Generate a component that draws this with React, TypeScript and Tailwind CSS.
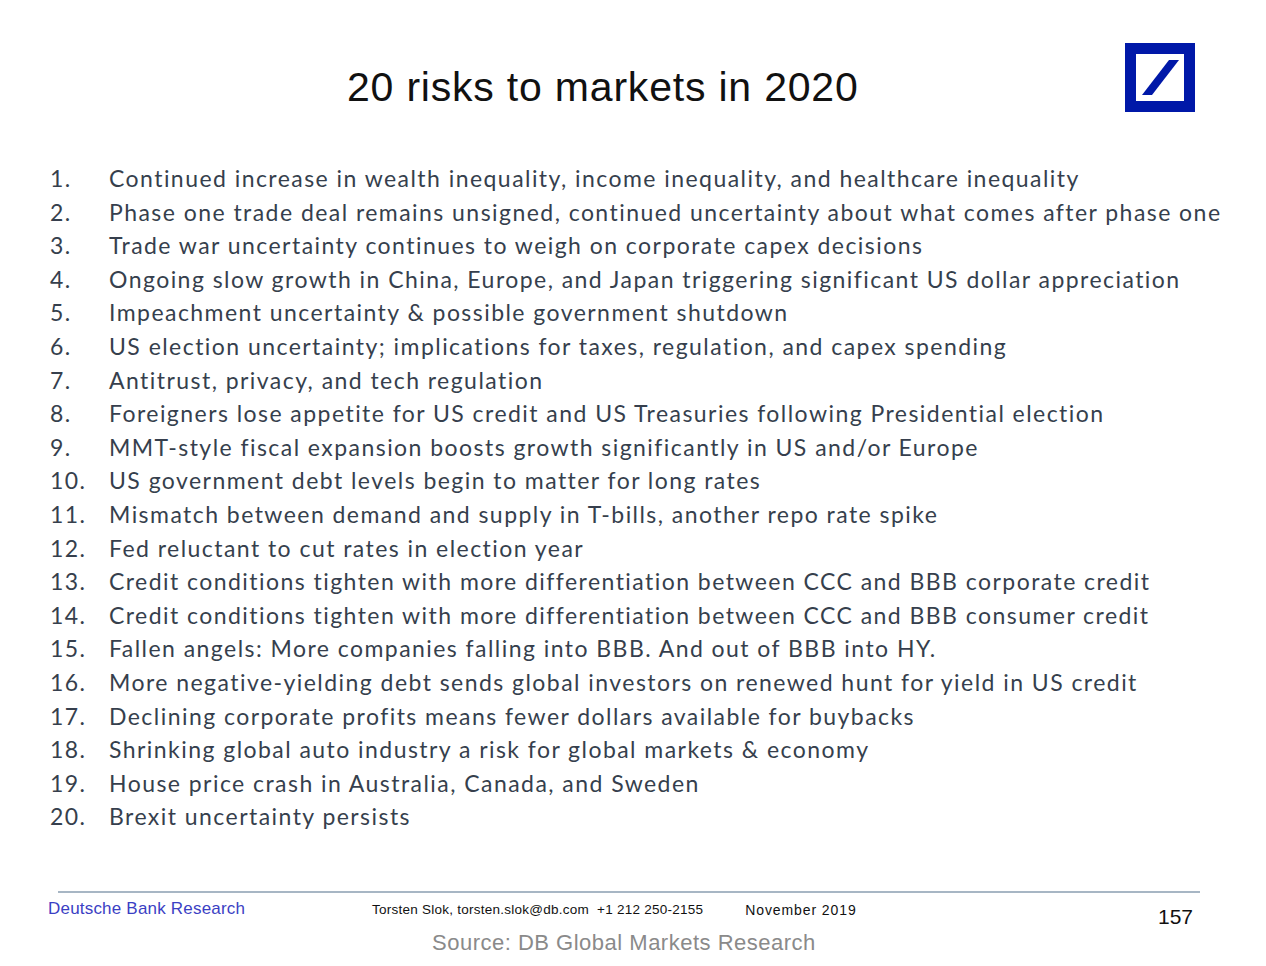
import React from "react";

const risks = [
  "Continued increase in wealth inequality, income inequality, and healthcare inequality",
  "Phase one trade deal remains unsigned, continued uncertainty about what comes after phase one",
  "Trade war uncertainty continues to weigh on corporate capex decisions",
  "Ongoing slow growth in China, Europe, and Japan triggering significant US dollar appreciation",
  "Impeachment uncertainty & possible government shutdown",
  "US election uncertainty; implications for taxes, regulation, and capex spending",
  "Antitrust, privacy, and tech regulation",
  "Foreigners lose appetite for US credit and US Treasuries following Presidential election",
  "MMT-style fiscal expansion boosts growth significantly in US and/or Europe",
  "US government debt levels begin to matter for long rates",
  "Mismatch between demand and supply in T-bills, another repo rate spike",
  "Fed reluctant to cut rates in election year",
  "Credit conditions tighten with more differentiation between CCC and BBB corporate credit",
  "Credit conditions tighten with more differentiation between CCC and BBB consumer credit",
  "Fallen angels: More companies falling into BBB. And out of BBB into HY.",
  "More negative-yielding debt sends global investors on renewed hunt for yield in US credit",
  "Declining corporate profits means fewer dollars available for buybacks",
  "Shrinking global auto industry a risk for global markets & economy",
  "House price crash in Australia, Canada, and Sweden",
  "Brexit uncertainty persists",
];

function Logo() {
  return (
    <svg width="70" height="69" viewBox="0 0 70 69" className="shrink-0">
      <rect x="5.5" y="5.5" width="59" height="58" fill="none" stroke="#0018A8" strokeWidth="11" />
      <polygon points="17,52 27,52 54,17 44,17" fill="#0018A8" />
    </svg>
  );
}

export default function App() {
  return (
    <div className="w-[1266px] h-[966px] bg-white relative overflow-hidden">
      <div className="flex items-start pt-[43px]">
        <h1
          className="ml-[347px] mt-[21px] text-[41px] leading-[46px] tracking-[0.8px] text-[#111111] font-normal"
          style={{ fontFamily: '"Liberation Sans", Arial, sans-serif' }}
        >
          20 risks to markets in 2020
        </h1>
        <div className="ml-auto mr-[71px]">
          <Logo />
        </div>
      </div>

      <ol
        className="mt-[50px] pl-[50px] text-[#363f4d] text-[23px] leading-[33.6px] tracking-[1.45px]"
        style={{ fontFamily: 'Lato, "Open Sans", sans-serif' }}
      >
        {risks.map((r, i) => (
          <li key={i} className="flex">
            <span className="w-[59px] shrink-0">{i + 1}.</span>
            <span className="whitespace-nowrap">{r}</span>
          </li>
        ))}
      </ol>

      <div
        className="absolute left-0 right-0 top-[891px]"
        style={{ fontFamily: '"Liberation Sans", Arial, sans-serif' }}
      >
        <div className="ml-[58px] mr-[66px] h-[2px] bg-[#a7b6c4]" />
        <div className="flex items-start mt-[6px]">
          <div className="ml-[48px] w-[324px] text-[17px] leading-[20px] tracking-[0.2px] text-[#3b3fc4]">Deutsche Bank Research</div>
          <div className="mt-[3px] text-[13.5px] leading-[16px] text-[#111] tracking-[0.25px] whitespace-nowrap">
            Torsten Slok, torsten.slok@db.com&nbsp;&nbsp;+1 212 250-2155
          </div>
          <div className="ml-[42px] mt-[3px] text-[14px] leading-[16px] tracking-[0.9px] text-[#111] whitespace-nowrap">November 2019</div>
          <div className="ml-auto mr-[73px] mt-[6px] text-[21px] leading-[24px] text-[#111]">157</div>
        </div>
        <div className="ml-[432px] mt-[1px] text-[22px] leading-[26px] tracking-[0.5px] text-[#8a8a8a]">Source: DB Global Markets Research</div>
      </div>
    </div>
  );
}
